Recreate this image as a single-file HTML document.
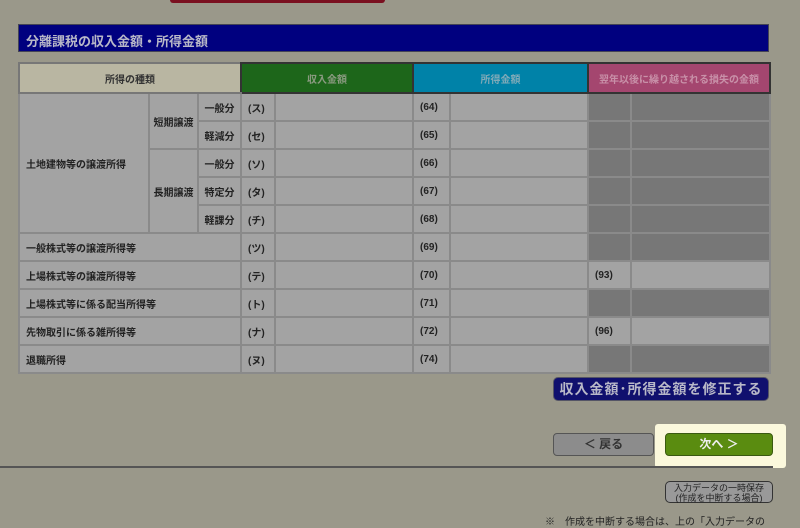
<!DOCTYPE html><html><head><meta charset="utf-8"><style>
body{margin:0;width:800px;height:525px;overflow:hidden;background:#9a988a;font-family:"Liberation Sans","Noto Sans CJK JP",sans-serif;position:relative}
.a{position:absolute;box-sizing:border-box}
table{position:absolute;left:18px;top:62px;width:751px;border-collapse:collapse;table-layout:fixed;font-size:10px;font-weight:bold;color:#222}
td{border:2px solid #8a8a8a;background:#a3a3a3;padding:0 0 0 6px;height:28px;box-sizing:border-box}
tr{height:28px}
tr.h{height:26px}
th{height:26px;font-size:10px;border:2px solid #333;}
.c{text-align:center;padding:0}
.d{background:#777}
</style></head><body>
<div class="a" style="left:170px;top:0;width:215px;height:3px;background:#7a1020;border-radius:0 0 6px 6px"></div>
<div class="a" style="left:18px;top:24px;width:751px;height:28px;background:#00007f;border:1px solid #445;color:#b8b8c8;font-size:13px;font-weight:bold;padding:6px 0 0 7px">分離課税の収入金額・所得金額</div>
<table>
<colgroup><col style="width:130px"><col style="width:49px"><col style="width:43px"><col style="width:34px"><col style="width:138px"><col style="width:37px"><col style="width:138px"><col style="width:43px"><col style="width:139px"></colgroup>
<tr class="h"><th colspan="3" style="background:#b9b6a2;border-color:#777 #333 #777 #777;color:#333">所得の種類</th><th colspan="2" style="background:#1d661a;color:#8a9a80">収入金額</th><th colspan="2" style="background:#0082a8;color:#80aab8">所得金額</th><th colspan="2" style="background:#a4466f;color:#c890a8">翌年以後に繰り越される損失の金額</th></tr>
<tr><td rowspan="5">土地建物等の譲渡所得</td><td rowspan="2" class="c">短期譲渡</td><td class="c">一般分</td><td>(ス)</td><td></td><td>(64)</td><td></td><td class="d"></td><td class="d"></td></tr>
<tr><td class="c">軽減分</td><td>(セ)</td><td></td><td>(65)</td><td></td><td class="d"></td><td class="d"></td></tr>
<tr><td rowspan="3" class="c">長期譲渡</td><td class="c">一般分</td><td>(ソ)</td><td></td><td>(66)</td><td></td><td class="d"></td><td class="d"></td></tr>
<tr><td class="c">特定分</td><td>(タ)</td><td></td><td>(67)</td><td></td><td class="d"></td><td class="d"></td></tr>
<tr><td class="c">軽課分</td><td>(チ)</td><td></td><td>(68)</td><td></td><td class="d"></td><td class="d"></td></tr>
<tr><td colspan="3">一般株式等の譲渡所得等</td><td>(ツ)</td><td></td><td>(69)</td><td></td><td class="d"></td><td class="d"></td></tr>
<tr><td colspan="3">上場株式等の譲渡所得等</td><td>(テ)</td><td></td><td>(70)</td><td></td><td>(93)</td><td></td></tr>
<tr><td colspan="3">上場株式等に係る配当所得等</td><td>(ト)</td><td></td><td>(71)</td><td></td><td class="d"></td><td class="d"></td></tr>
<tr><td colspan="3">先物取引に係る雑所得等</td><td>(ナ)</td><td></td><td>(72)</td><td></td><td>(96)</td><td></td></tr>
<tr><td colspan="3">退職所得</td><td>(ヌ)</td><td></td><td>(74)</td><td></td><td class="d"></td><td class="d"></td></tr>
</table>
<div class="a" style="left:553px;top:377px;width:216px;height:24px;background:#10106e;border:1px solid #556;border-radius:5px;color:#b8b8c8;font-size:14px;font-weight:bold;text-align:center;line-height:22px;letter-spacing:1px">収入金額･所得金額を修正する</div>
<div class="a" style="left:655px;top:424px;width:131px;height:44px;background:#fbf8dc;border-radius:3px"></div>
<div class="a" style="left:553px;top:433px;width:101px;height:23px;background:#8c8c8c;border:1px solid #555;border-radius:4px;color:#333;font-size:12px;text-align:center;line-height:21px;font-weight:bold">＜ 戻る</div>
<div class="a" style="left:665px;top:433px;width:108px;height:23px;background:#5a8c10;border:1px solid #3a5a10;border-radius:4px;color:#eee;font-size:12px;text-align:center;line-height:21px;font-weight:bold">次へ ＞</div>
<div class="a" style="left:0;top:466px;width:773px;height:2px;background:#555"></div>
<div class="a" style="left:665px;top:481px;width:108px;height:22px;background:#999;border:1px solid #333;border-radius:5px;color:#222;font-size:9px;text-align:center;line-height:10px;padding-top:1px">入力データの一時保存<br>(作成を中断する場合)</div>
<div class="a" style="left:545px;top:513px;color:#222;font-size:10px;white-space:nowrap">※　作成を中断する場合は、上の「入力データの</div>
</body></html>
